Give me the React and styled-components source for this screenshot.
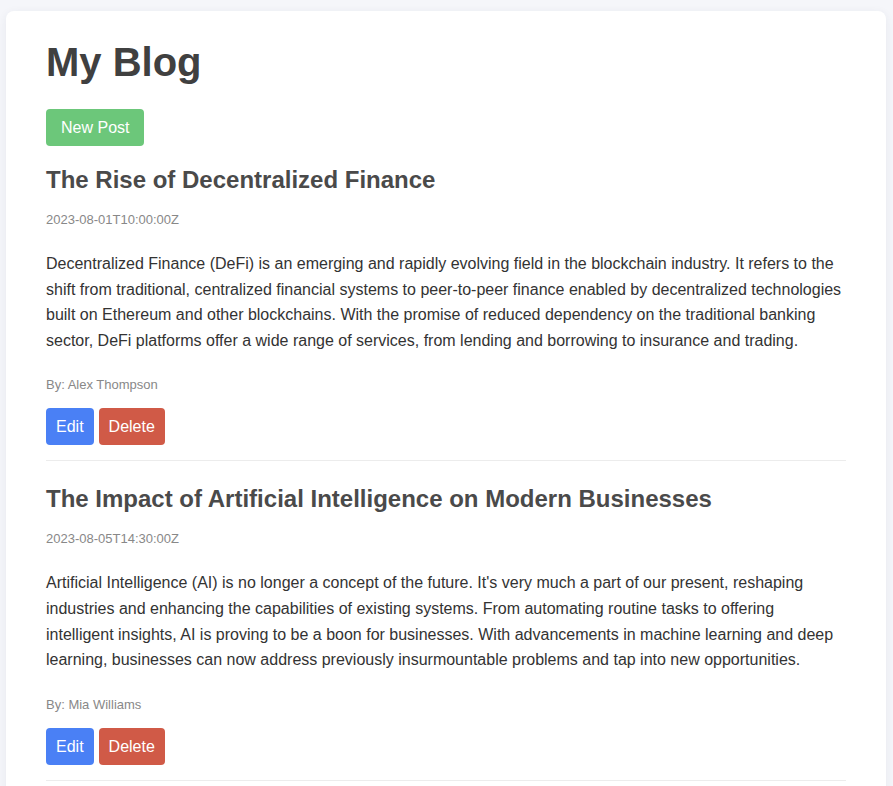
import React from "react";
import styled, { createGlobalStyle } from "styled-components";

const GlobalStyle = createGlobalStyle`
  body {
    margin: 0;
    background-color: #f5f6fa;
    font-family: "Liberation Sans", Arial, sans-serif;
    color: #333;
  }
`;

const Page = styled.div`
  padding: 11px 1px 20px 0;
`;

const Card = styled.div`
  max-width: 880px;
  margin: 0 auto;
  box-sizing: border-box;
  padding: 28px 40px 30px;
  background-color: #fff;
  border-radius: 8px;
  box-shadow: 0 2px 10px rgba(40, 50, 90, 0.07);
`;

const Title = styled.h1`
  margin: 0 0 24px;
  font-size: 40px;
  line-height: 46px;
  font-weight: bold;
  color: #404040;
`;

const Button = styled.button`
  font-family: inherit;
  font-size: 16px;
  line-height: 19px;
  padding: 9px ${(props) => (props.wide ? "15px" : "10px")};
  border: none;
  border-radius: 4px;
  color: #fff;
  cursor: pointer;
  background-color: ${(props) => props.bg};
`;

const NewPostButton = styled(Button)`
  display: block;
  margin-bottom: 20px;
`;

const Post = styled.article`
  padding-bottom: 15px;
  margin-bottom: 24px;
  border-bottom: 1px solid #ececec;
`;

const PostTitle = styled.h2`
  margin: 0 0 18px;
  font-size: 24px;
  line-height: 28px;
  font-weight: bold;
  color: #4a4a4a;
`;

const Meta = styled.div`
  font-size: 13px;
  line-height: 15px;
  color: #888;
`;

const Content = styled.p`
  margin: 24px 0;
  font-size: 16px;
  line-height: 25.6px;
  color: #333;
`;

const Actions = styled.div`
  display: flex;
  gap: 5px;
  margin-top: 16px;
`;

const posts = [
  {
    id: 1,
    title: "The Rise of Decentralized Finance",
    date: "2023-08-01T10:00:00Z",
    content:
      "Decentralized Finance (DeFi) is an emerging and rapidly evolving field in the blockchain industry. It refers to the shift from traditional, centralized financial systems to peer-to-peer finance enabled by decentralized technologies built on Ethereum and other blockchains. With the promise of reduced dependency on the traditional banking sector, DeFi platforms offer a wide range of services, from lending and borrowing to insurance and trading.",
    author: "Alex Thompson",
  },
  {
    id: 2,
    title: "The Impact of Artificial Intelligence on Modern Businesses",
    date: "2023-08-05T14:30:00Z",
    content:
      "Artificial Intelligence (AI) is no longer a concept of the future. It's very much a part of our present, reshaping industries and enhancing the capabilities of existing systems. From automating routine tasks to offering intelligent insights, AI is proving to be a boon for businesses. With advancements in machine learning and deep learning, businesses can now address previously insurmountable problems and tap into new opportunities.",
    author: "Mia Williams",
  },
];

function App() {
  return (
    <Page>
      <GlobalStyle />
      <Card>
        <Title>My Blog</Title>
        <NewPostButton wide bg="#6cc77a">New Post</NewPostButton>
        {posts.map((post) => (
          <Post key={post.id}>
            <PostTitle>{post.title}</PostTitle>
            <Meta>{post.date}</Meta>
            <Content>{post.content}</Content>
            <Meta>By: {post.author}</Meta>
            <Actions>
              <Button bg="#4a80f5">Edit</Button>
              <Button bg="#d05a47">Delete</Button>
            </Actions>
          </Post>
        ))}
      </Card>
    </Page>
  );
}

export default App;
